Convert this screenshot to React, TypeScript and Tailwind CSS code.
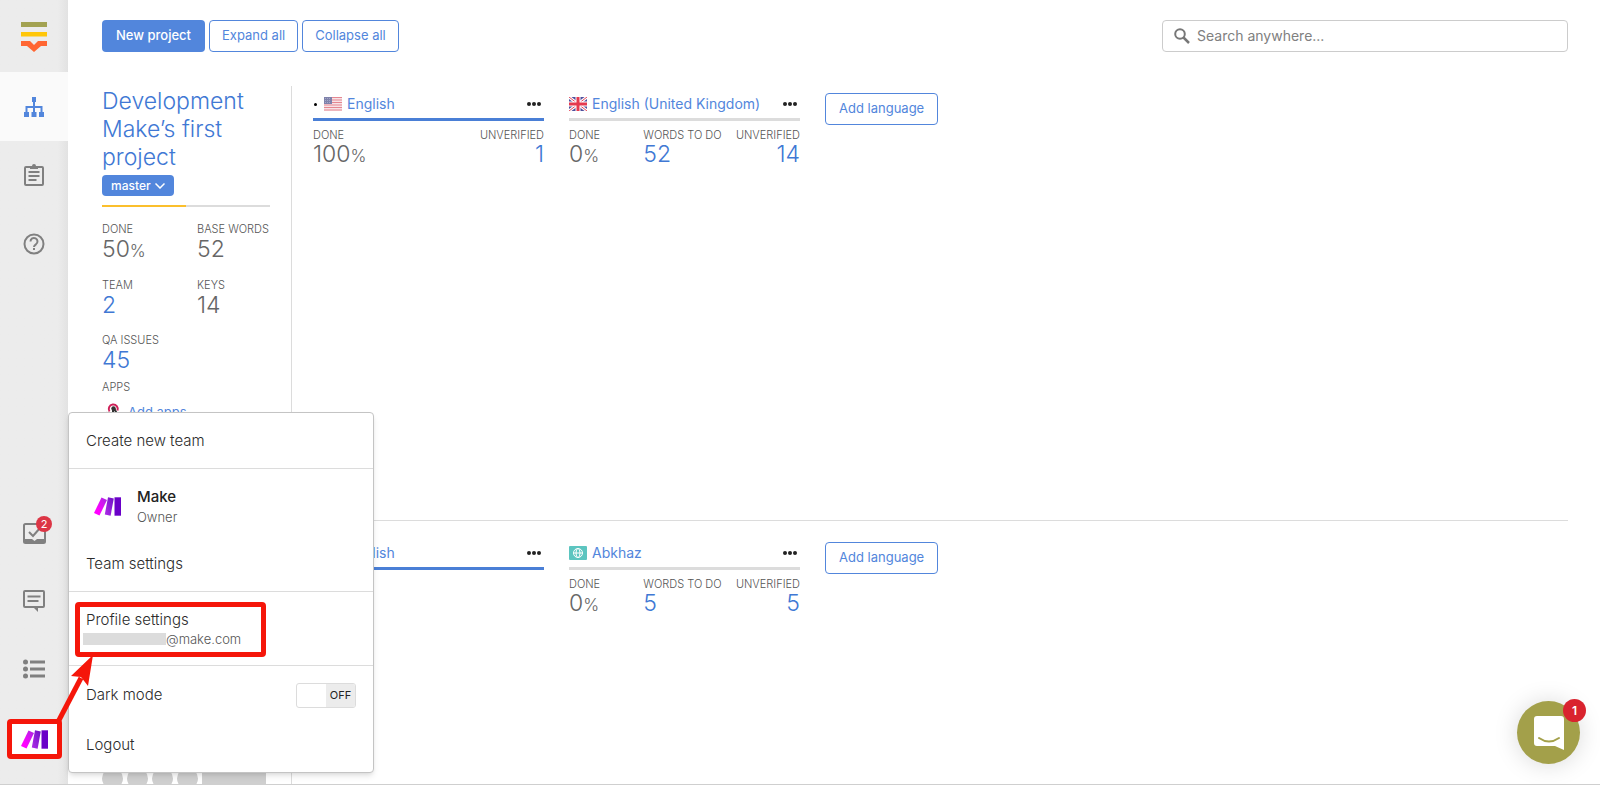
import type { ReactNode } from 'react'

type Stat = {
  label: string
  value: string
  percent?: boolean
  link?: boolean
}

type Language = {
  name: string
  flag: ReactNode
  base?: boolean
  complete?: boolean
  stats: Stat[]
}

function LokaliseLogo() {
  return (
    <svg width="26" height="30" viewBox="0 0 26 30">
      <path d="M0 0h26v5H0z" fill="#a3a251" />
      <path d="M0 10h26v4.500H0z" fill="#ffc70a" />
      <path d="M0 19h9l4 4 4-4h9v5h-6l-7 6-7-6H0z" fill="#ff6633" />
    </svg>
  )
}

function SitemapIcon() {
  return (
    <svg width="20" height="20" viewBox="0 0 20 20" fill="#5286dc">
      <path d="M8 0h4v5H8zM0 15h5v5H0zM7.500 15h5v5h-5zM15 15h5v5h-5z" />
      <path
        d="M10 4v12M2.500 16v-6h15v6"
        fill="none"
        stroke="#5286dc"
        strokeWidth="2"
      />
    </svg>
  )
}

function ClipboardIcon() {
  return (
    <svg
      width="20"
      height="22"
      viewBox="0 0 20 22"
      fill="none"
      stroke="#808080"
      strokeWidth="2"
    >
      <rect x="1" y="3" width="18" height="18" rx="1" />
      <path d="M4.500 8h11M4.500 12h11M4.500 16h8" />
      <path d="M6 2h2a2 2 0 0 1 4 0h2v3H6z" fill="#808080" stroke="none" />
    </svg>
  )
}

function HelpIcon() {
  return (
    <svg
      width="22"
      height="22"
      viewBox="0 0 22 22"
      fill="none"
      stroke="#808080"
      strokeWidth="2"
    >
      <circle cx="11" cy="11" r="9.500" />
      <path d="M7.500 8.500a3.500 3.500 0 1 1 5.500 2.800c-1.300 1-2 1.500-2 2.700M11 15v2" />
    </svg>
  )
}

function InboxIcon() {
  return (
    <svg width="23" height="21" viewBox="0 0 23 21" fill="none" stroke="#808080">
      <rect x="1" y="1" width="21" height="19" rx="1.500" strokeWidth="2" />
      <path d="M1 16h8l2.500 2 2.500-2h8v4H1z" fill="#808080" stroke="none" />
      <path d="M6 9l4 4 7-8" strokeWidth="2" />
    </svg>
  )
}

function CommentIcon() {
  return (
    <svg
      width="22"
      height="22"
      viewBox="0 0 22 22"
      fill="none"
      stroke="#808080"
      strokeWidth="2"
    >
      <rect x="1" y="1" width="20" height="16" rx="1" />
      <path d="M4.500 6.500h13M4.500 11h11" />
      <path d="M10 17h5v5z" fill="#808080" stroke="none" />
    </svg>
  )
}

function ListIcon() {
  return (
    <svg width="22" height="20" viewBox="0 0 22 20" fill="#808080">
      <circle cx="2.500" cy="3" r="2.500" />
      <circle cx="2.500" cy="10" r="2.500" />
      <circle cx="2.500" cy="17" r="2.500" />
      <path d="M7 1.500h15v3H7zM7 8.500h15v3H7zM7 15.500h15v3H7z" />
    </svg>
  )
}

function MakeLogo() {
  return (
    <svg width="27" height="19" viewBox="0 0 27 19">
      <defs>
        <linearGradient id="make-a" x1="0" y1="1" x2="1" y2="0">
          <stop offset="0.300" stopColor="#ff00ff" />
          <stop offset="1" stopColor="#a52be0" />
        </linearGradient>
        <linearGradient id="make-b" x1="0" y1="1" x2="1" y2="0">
          <stop offset="0" stopColor="#b02de9" />
          <stop offset="1" stopColor="#6d10c4" />
        </linearGradient>
      </defs>
      <path d="M7.500 0.500l5.500 2.500-7.500 15.500-5.500-2.500z" fill="url(#make-a)" />
      <path d="M14 0.200l5.800 1.200-3.200 17.300-5.800-1.200z" fill="url(#make-b)" />
      <path d="M20.500 0.300h6.500v18.400h-6.500z" fill="#6a00c8" />
    </svg>
  )
}

function AppsIcon() {
  return (
    <svg width="18" height="18" viewBox="0 0 18 18" fill="none">
      <path d="M4.500 8.500A4.500 4.500 0 1 1 12.500 7.500" stroke="#cf2159" strokeWidth="2" />
      <circle cx="8.500" cy="5.500" r="2.200" fill="#333" />
      <path
        d="M8 5.500v9L2 10l-2 2M9.500 6l2.500 5h4v5"
        stroke="#333"
        strokeWidth="2"
      />
    </svg>
  )
}

function UsFlag() {
  return (
    <svg width="18" height="14" viewBox="0 0 18 14">
      <path d="M0 0h18v14H0z" fill="#f7e3e6" />
      <path
        d="M0 0.500h18M0 3h18M0 5.500h18M0 8h18M0 10.500h18M0 13h18"
        stroke="#e58791"
        strokeWidth="1.200"
      />
      <path d="M0 0h8v7H0z" fill="#7f82ab" />
      <path
        d="M1 1.500h6M1 3.500h6M1 5.500h6"
        stroke="#a5a8c8"
        strokeDasharray="1 1"
      />
    </svg>
  )
}

function UkFlag() {
  return (
    <svg width="18" height="14" viewBox="0 0 18 14">
      <path d="M0 0h18v14H0z" fill="#4e4f9c" />
      <path d="M0 0l18 14M18 0L0 14" stroke="#fff" strokeWidth="3" />
      <path d="M0 0l18 14M18 0L0 14" stroke="#e5495c" />
      <path d="M9 0v14M0 7h18" stroke="#fff" strokeWidth="5" />
      <path d="M9 0v14M0 7h18" stroke="#e5394f" strokeWidth="3" />
    </svg>
  )
}

function GlobeFlag() {
  return (
    <svg width="18" height="14" viewBox="0 0 18 14">
      <rect width="18" height="14" rx="1" fill="#5cc5c0" />
      <g fill="none" stroke="#fff">
        <circle cx="9" cy="7" r="4.500" />
        <ellipse cx="9" cy="7" rx="2" ry="4.500" />
        <path d="M4.500 7h9" />
      </g>
    </svg>
  )
}

const navItems = [
  { label: 'Projects', icon: <SitemapIcon />, active: true },
  { label: 'Orders', icon: <ClipboardIcon /> },
  { label: 'Help', icon: <HelpIcon /> },
]

const bottomItems = [
  { label: 'Tasks', icon: <InboxIcon />, badge: 2 },
  { label: 'Comments', icon: <CommentIcon /> },
  { label: 'Activity', icon: <ListIcon /> },
]

const projectStats: Stat[] = [
  { label: 'Done', value: '50', percent: true },
  { label: 'Base words', value: '52' },
  { label: 'Team', value: '2', link: true },
  { label: 'Keys', value: '14' },
  { label: 'QA issues', value: '45', link: true },
]

const firstLanguages: Language[] = [
  {
    name: 'English',
    flag: <UsFlag />,
    base: true,
    complete: true,
    stats: [
      { label: 'Done', value: '100', percent: true },
      { label: 'Unverified', value: '1', link: true },
    ],
  },
  {
    name: 'English (United Kingdom)',
    flag: <UkFlag />,
    stats: [
      { label: 'Done', value: '0', percent: true },
      { label: 'Words to do', value: '52', link: true },
      { label: 'Unverified', value: '14', link: true },
    ],
  },
]

const secondLanguages: Language[] = [
  {
    name: 'English',
    flag: <UsFlag />,
    base: true,
    complete: true,
    stats: [],
  },
  {
    name: 'Abkhaz',
    flag: <GlobeFlag />,
    stats: [
      { label: 'Done', value: '0', percent: true },
      { label: 'Words to do', value: '5', link: true },
      { label: 'Unverified', value: '5', link: true },
    ],
  },
]

function StatBlock({ stat, className = '' }: { stat: Stat; className?: string }) {
  return (
    <div className={`flex flex-col ${className}`}>
      <p className="text-[11px] leading-4 font-light uppercase text-[#555]">
        {stat.label}
      </p>
      {stat.link ? (
        <a href="#" className="text-[23px] leading-5 font-light text-[#4078d4]">
          {stat.value}
        </a>
      ) : (
        <p className="text-[23px] leading-5 font-light text-[#666]">
          {stat.value}
          {stat.percent && <span className="text-[17px] leading-none">%</span>}
        </p>
      )}
    </div>
  )
}

function LanguageCard({ language }: { language: Language }) {
  return (
    <div className="w-[231px]">
      <div
        className={`flex items-center h-[35px] pt-1 border-b-3 ${
          language.complete ? 'border-[#4a7fd6]' : 'border-[#dcdcdc]'
        }`}
      >
        {language.base && (
          <span className="size-[3px] ml-px mr-[7px] rounded-full bg-black" />
        )}
        {language.flag}
        <a href="#" className="ml-[5px] text-sm text-[#5286dc]">
          {language.name}
        </a>
        <button
          type="button"
          aria-label="More"
          className="flex gap-px ml-auto mr-[3px] cursor-pointer"
        >
          <span className="size-1 rounded-full bg-[#222]" />
          <span className="size-1 rounded-full bg-[#222]" />
          <span className="size-1 rounded-full bg-[#222]" />
        </button>
      </div>
      <div className="flex justify-between mt-[6px]">
        {language.stats.map((stat) => (
          <StatBlock
            key={stat.label}
            stat={stat}
            className={`gap-px last:text-right ${language.stats.length > 2 ? 'first:w-[60px]' : ''}`}
          />
        ))}
      </div>
    </div>
  )
}

function LanguageList({ languages }: { languages: Language[] }) {
  return (
    <div className="flex items-start flex-1 gap-[25px] pl-[21px] border-l border-[#dcdcdc]">
      {languages.map((language) => (
        <LanguageCard key={language.name} language={language} />
      ))}
      <button
        type="button"
        className="h-8 px-[13px] mt-[7px] rounded-[4px] border border-[#5286dc] text-[13px] text-[#5286dc] whitespace-nowrap cursor-pointer"
      >
        Add language
      </button>
    </div>
  )
}

function AccountMenu() {
  return (
    <div className="absolute left-[68px] bottom-[11px] z-10 w-[306px] h-[361px] flex flex-col bg-white border border-[#c4c4c4] rounded-[4px] shadow-md text-[15px] font-light text-[#2b2b2b]">
      <a href="#" className="flex items-center h-14 px-[17px] pt-[2px] border-b border-[#dcdcdc]">
        Create new team
      </a>
      <div className="h-[123px] border-b border-[#dcdcdc]">
        <a href="#" className="flex items-center gap-4 h-[75px] pl-[25px]">
          <MakeLogo />
          <span className="flex flex-col">
            <span className="font-medium leading-5 text-[#222]">Make</span>
            <span className="text-[13px] leading-5 text-[#555]">Owner</span>
          </span>
        </a>
        <a href="#" className="flex items-center h-10 px-[17px]">
          Team settings
        </a>
      </div>
      <div className="h-[74px] pt-[10px] px-[6px] border-b border-[#dcdcdc]">
        <a
          href="#"
          className="flex flex-col justify-center w-[191px] h-[55px] pl-[6px] pb-px border-5 border-[#f5160a] rounded-[4px]"
        >
          <span className="leading-5">Profile settings</span>
          <span className="flex items-center text-[13px] leading-[18px] text-[#555]">
            <span className="w-[83px] h-3 -ml-[3px] bg-[#dcdcdc]" />
            @make.com
          </span>
        </a>
      </div>
      <label className="flex items-center justify-between h-[57px] px-[17px] pt-px cursor-pointer">
        Dark mode
        <input type="checkbox" className="sr-only" />
        <span className="flex w-[60px] h-[25px] border border-[#dcdcdc] rounded-[3px] bg-white overflow-hidden">
          <span className="flex items-center justify-center w-[29px] ml-auto bg-[#ececec] text-[11px] font-normal text-[#222]">
            OFF
          </span>
        </span>
      </label>
      <a href="#" className="flex items-center h-[45px] px-[17px]">
        Logout
      </a>
    </div>
  )
}

function Sidebar() {
  return (
    <nav className="relative flex flex-col w-[68px] shrink-0 bg-linear-to-r from-[#ececec] from-85% to-[#e2e2e2]">
      <a href="#" aria-label="Home" className="flex items-center justify-center h-[72px] pt-[2px]">
        <LokaliseLogo />
      </a>
      {navItems.map((item) => (
        <a
          key={item.label}
          href="#"
          aria-label={item.label}
          className={`flex items-center justify-center h-[69px] ${item.active ? 'bg-[#fafafa]' : 'pb-[2px]'}`}
        >
          {item.icon}
        </a>
      ))}
      <div className="mt-auto mb-[9px]">
        {bottomItems.map((item) => (
          <a
            key={item.label}
            href="#"
            aria-label={item.label}
            className="relative flex items-center justify-center h-[68px]"
          >
            {item.icon}
            {item.badge && (
              <span className="absolute top-[17px] right-4 flex items-center justify-center size-4 rounded-full bg-[#dc3545] text-[11px] text-white">
                {item.badge}
              </span>
            )}
          </a>
        ))}
        <div className="flex items-center h-[72px] pl-[7px]">
          <button
            type="button"
            aria-label="Account"
            className="flex items-center justify-center w-[55px] h-10 border-5 border-[#f5160a] rounded-[4px] bg-white cursor-pointer"
          >
            <MakeLogo />
          </button>
        </div>
      </div>
      <svg
        className="absolute left-[50px] bottom-[60px] z-20 pointer-events-none"
        width="50"
        height="70"
        viewBox="0 0 50 70"
      >
        <path d="M8 68l23-44" stroke="#f5160a" strokeWidth="5" />
        <path d="M43 1L21 22l10 1 7 9z" fill="#f5160a" />
      </svg>
    </nav>
  )
}

function Messenger() {
  return (
    <button
      type="button"
      aria-label="Open chat"
      className="absolute right-5 bottom-5 flex items-center justify-center size-[63px] rounded-full bg-[#a3a04a] shadow-[0_1px_24px_rgba(0,0,0,0.15)] cursor-pointer"
    >
      <svg width="30" height="34" viewBox="0 0 30 34" fill="none">
        <path d="M3 0h24a3 3 0 0 1 3 3v31l-9-4H3a3 3 0 0 1-3-3V3a3 3 0 0 1 3-3z" fill="#fff" />
        <path d="M5 22q10 7 20 0" stroke="#a3a04a" strokeWidth="2" strokeLinecap="round" />
      </svg>
      <span className="absolute -top-[2px] -right-[6px] flex items-center justify-center size-[23px] rounded-full bg-[#d9232e] text-xs font-semibold text-white">
        1
      </span>
    </button>
  )
}

export default function App() {
  return (
    <div className="relative flex h-screen overflow-hidden bg-white border-b border-[#cfcfcf] font-['Inter',sans-serif]">
      <Sidebar />
      <AccountMenu />

      <main className="flex-1 pl-[34px] pr-8 pt-5 overflow-hidden">
        <div className="flex items-center gap-1">
          <button
            type="button"
            className="h-8 px-[14px] rounded-[4px] bg-[#5286dc] text-[13px] font-medium text-white cursor-pointer"
          >
            New project
          </button>
          <button
            type="button"
            className="h-8 px-3 rounded-[4px] border border-[#5286dc] text-[13px] text-[#5286dc] cursor-pointer"
          >
            Expand all
          </button>
          <button
            type="button"
            className="h-8 px-3 rounded-[4px] border border-[#5286dc] text-[13px] text-[#5286dc] cursor-pointer"
          >
            Collapse all
          </button>
          <label className="flex items-center gap-[7px] w-[406px] h-8 ml-auto px-[11px] border border-[#ccc] rounded-[4px]">
            <svg width="16" height="16" viewBox="0 0 16 16" fill="none" stroke="#777">
              <circle cx="6" cy="6" r="4.800" strokeWidth="2" />
              <path d="M9.500 9.500l5.500 5.500" strokeWidth="2.500" />
            </svg>
            <input
              type="text"
              aria-label="Search"
              placeholder="Search anywhere..."
              className="flex-1 text-sm outline-none placeholder:text-[#808080]"
            />
          </label>
        </div>

        <section className="flex h-[434px] mt-[34px]">
          <div className="w-[189px] pr-[21px] pt-px">
            <h2 className="text-[23px] leading-7 font-light">
              <a href="#" className="text-[#4078d4]">
                Development Make’s first project
              </a>
            </h2>
            <button
              type="button"
              className="flex items-center gap-1 h-[21px] mt-1 px-[9px] rounded-[4px] bg-[#5286dc] text-xs font-medium text-white cursor-pointer"
            >
              master
              <svg width="10" height="6" viewBox="0 0 10 6" fill="none" stroke="#fff">
                <path d="M0.500 0.500L5 5l4.500-4.500" strokeWidth="1.500" />
              </svg>
            </button>
            <div className="h-[2px] mt-[9px] bg-[#dcdcdc]">
              <div className="w-1/2 h-full bg-[#fbbf2c]" />
            </div>
            <div className="grid grid-cols-[95px_1fr] gap-y-[17px] mt-[14px]">
              {projectStats.map((stat) => (
                <StatBlock key={stat.label} stat={stat} className="gap-[2px]" />
              ))}
            </div>
            <p className="mt-[9px] text-[11px] leading-4 font-light uppercase text-[#555]">
              Apps
            </p>
            <a href="#" className="flex items-center gap-[5px] mt-[7px] pl-[3px] text-[13px] leading-5 text-[#5286dc]">
              <AppsIcon />
              Add apps
            </a>
          </div>
          <LanguageList languages={firstLanguages} />
        </section>

        <section className="flex h-[269px] border-t border-[#dcdcdc] pt-[14px]">
          <div className="flex items-end gap-1 w-[189px] pr-[21px]">
            <span className="size-[21px] rounded-full bg-[#cfcfcf]" />
            <span className="size-[21px] rounded-full bg-[#cfcfcf]" />
            <span className="size-[21px] rounded-full bg-[#cfcfcf]" />
            <span className="size-[21px] rounded-full bg-[#cfcfcf]" />
            <span className="w-16 h-[21px] rounded-[4px] bg-[#cfcfcf]" />
          </div>
          <LanguageList languages={secondLanguages} />
        </section>
      </main>

      <Messenger />
    </div>
  )
}
